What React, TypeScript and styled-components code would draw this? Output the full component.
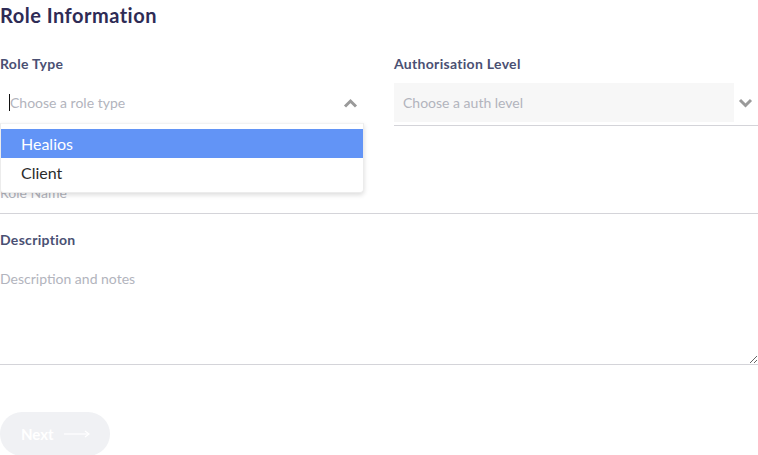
import { FC } from "react";
import { styled, createGlobalStyle } from "styled-components";

const GlobalStyle = createGlobalStyle`
  html, body {
    margin: 0;
    padding: 0;
    background: #ffffff;
  }
  body {
    font-family: "Lato", "Open Sans", sans-serif;
    overflow: hidden;
  }
`;

const Page = styled.div`
  width: 758px;
  height: 455px;
  overflow: hidden;
`;

const Title = styled.h2`
  margin: 0;
  padding-top: 2px;
  font-size: 20px;
  line-height: 26px;
  font-weight: 700;
  letter-spacing: 0.5px;
  color: #2e2b55;
`;

const Row = styled.div`
  display: grid;
  grid-template-columns: 363px 364px;
  column-gap: 31px;
  margin-top: 27px;
`;

const Field = styled.div<{ $mt?: number }>`
  display: flex;
  flex-direction: column;
  margin-top: ${({ $mt }) => $mt ?? 0}px;
`;

const Label = styled.label`
  font-size: 14px;
  line-height: 18px;
  font-weight: 700;
  letter-spacing: 0.3px;
  color: #4a5073;
  margin-bottom: 10px;
`;

const SelectWrap = styled.div<{ $lined?: boolean }>`
  position: relative;
  display: flex;
  align-items: center;
  box-sizing: border-box;
  height: 43px;
  padding-bottom: 3px;
  border-bottom: 1px solid ${({ $lined }) => ($lined ? "#d4d4d9" : "transparent")};
`;

const SelectControl = styled.div<{ $filled?: boolean }>`
  flex: 1;
  height: 39px;
  display: flex;
  align-items: center;
  padding-left: ${({ $filled }) => ($filled ? 9 : 10)}px;
  background: ${({ $filled }) => ($filled ? "#f7f7f7" : "transparent")};
`;

const Caret = styled.span`
  width: 1px;
  height: 17px;
  background: #111;
  margin-left: -1px;
`;

const Placeholder = styled.span`
  font-size: 14px;
  color: #b2b4bd;
`;

const Chevron = styled.svg<{ $gap: number }>`
  width: 15px;
  height: 10px;
  margin: 0 ${({ $gap }) => $gap}px 0 4px;
  flex-shrink: 0;
`;

const Menu = styled.ul`
  position: absolute;
  top: calc(100% - 2px);
  left: 0;
  width: 364px;
  margin: 0;
  padding: 5px 0 5px;
  list-style: none;
  background: #ffffff;
  border: 1px solid #ececec;
  border-top-color: #f2f2f2;
  border-radius: 0 0 4px 4px;
  box-shadow: 0 2px 5px rgba(0, 0, 0, 0.14);
  box-sizing: border-box;
  z-index: 5;
`;

const Option = styled.li<{ $active?: boolean }>`
  height: 29px;
  display: flex;
  align-items: center;
  padding-left: 20px;
  font-size: 16px;
  color: ${({ $active }) => ($active ? "#ffffff" : "#2b2b2b")};
  background: ${({ $active }) => ($active ? "#6294f6" : "transparent")};
`;

const TextInput = styled.input`
  height: 42px;
  border: none;
  border-bottom: 1px solid #d4d4d9;
  padding: 0;
  font-family: inherit;
  font-size: 14px;
  outline: none;
  background: transparent;

  &::placeholder {
    color: #b2b4bd;
  }
`;

const TextArea = styled.textarea`
  height: 106px;
  box-sizing: border-box;
  border: none;
  border-bottom: 1px solid #d4d4d9;
  padding: 10px 0 0;
  font-family: inherit;
  font-size: 14px;
  line-height: 20px;
  outline: none;
  resize: vertical;
  background: transparent;

  &::placeholder {
    color: #b2b4bd;
  }
`;

const NextButton = styled.button`
  margin-top: 47px;
  width: 110px;
  height: 44px;
  border: none;
  border-radius: 22px;
  background: #f0f1f4;
  display: flex;
  align-items: center;
  gap: 10px;
  padding: 0 0 0 21px;
  font-family: inherit;
  font-size: 15px;
  font-weight: 700;
  color: #ffffff;
`;

const ChevronIcon: FC<{ up?: boolean; gap: number }> = ({ up, gap }) => (
  <Chevron $gap={gap} viewBox="0 0 15 10">
    <polyline
      points={up ? "2,8.5 7.5,3 13,8.5" : "2,2 7.5,7.5 13,2"}
      fill="none"
      stroke="#9a9a9a"
      strokeWidth="3"
    />
  </Chevron>
);

const roleTypes = ["Healios", "Client"];

export default function App() {
  return (
    <Page>
      <GlobalStyle />
      <Title>Role Information</Title>
      <Row>
        <Field>
          <Label>Role Type</Label>
          <SelectWrap>
            <SelectControl>
              <Caret />
              <Placeholder>Choose a role type</Placeholder>
            </SelectControl>
            <ChevronIcon up gap={5} />
            <Menu>
              {roleTypes.map((t, i) => (
                <Option key={t} $active={i === 0}>
                  {t}
                </Option>
              ))}
            </Menu>
          </SelectWrap>
        </Field>
        <Field>
          <Label>Authorisation Level</Label>
          <SelectWrap $lined>
            <SelectControl $filled>
              <Placeholder>Choose a auth level</Placeholder>
            </SelectControl>
            <ChevronIcon gap={5} />
          </SelectWrap>
        </Field>
      </Row>
      <Field $mt={17}>
        <Label>Role Name</Label>
        <TextInput placeholder="Role Name" />
      </Field>
      <Field $mt={17}>
        <Label>Description</Label>
        <TextArea placeholder="Description and notes" />
      </Field>
      <NextButton>
        Next
        <svg width="26" height="8" viewBox="0 0 26 8">
          <line x1="0" y1="4" x2="24" y2="4" stroke="#fff" strokeWidth="1.2" />
          <polyline points="21,1 25,4 21,7" fill="none" stroke="#fff" strokeWidth="1.2" />
        </svg>
      </NextButton>
    </Page>
  );
}
